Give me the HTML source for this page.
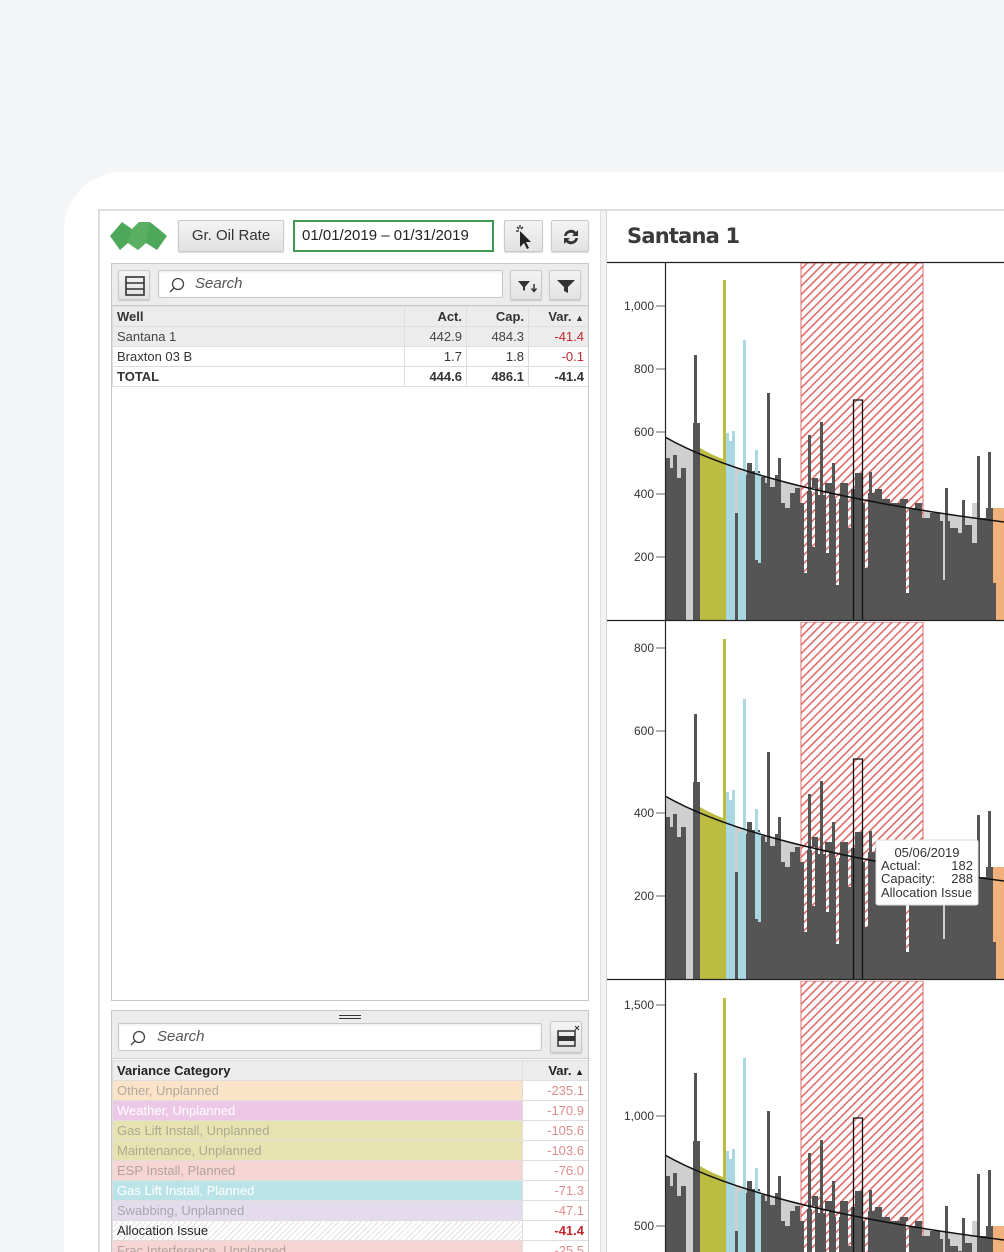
<!DOCTYPE html>
<html><head><meta charset="utf-8"><style>
*{box-sizing:border-box;margin:0;padding:0}
html,body{width:1004px;height:1252px;overflow:hidden}
body{background:#f4f5f7;position:relative;font-family:"Liberation Sans",sans-serif;color:#333}
.frame{position:absolute;left:64px;top:172px;width:940px;height:1080px;background:#fff;border-radius:58px 0 0 0}
.screen{position:absolute;left:98px;top:209px;width:906px;height:1043px;border:2px solid #dcdcdc;border-right:0;border-bottom:0;background:#fff}
.abs{position:absolute}
.btn{position:absolute;background:linear-gradient(#f4f4f4,#e2e2e2);border:1px solid #c9c9c9;border-radius:2px;box-shadow:0 1px 1px rgba(0,0,0,.15)}
.grid{position:absolute;border:1px solid #c8c8c8;background:#fff;overflow:hidden}
.tb{position:absolute;left:0;right:0;top:0;background:#ececec;border-bottom:1px solid #ccc}
.search{position:absolute;background:#fff;border:1px solid #c8c8c8;border-radius:2px;box-shadow:inset 0 1px 2px rgba(0,0,0,.08);font-style:italic;color:#555;font-size:15px}
table{border-collapse:collapse;font-size:13px;position:absolute}
td{height:20px;padding:0 4px;border:1px solid #ddd;white-space:nowrap}
.r{text-align:right}
.red{color:#c0282d}
.lt td{color:rgba(120,120,120,.55)}
</style></head><body>
<div class="frame"></div>
<div class="screen"></div>
<div class="abs" style="left:600px;top:211px;width:7px;height:1041px;background:#f3f3f3;border-left:1px solid #e2e2e2;border-right:1px solid #d5d5d5"></div>

<svg class="abs" style="left:110px;top:219px" width="58" height="34" viewBox="0 0 58 34"><polygon points="0,17 12,3 22,10 29,3 40,3 50,11 57,17 47,31 36,24 28,31 18,24 10,31" fill="#4ea85a"/><polygon points="22,10 29,3 40,3 36,24 28,31 18,24" fill="#5aaf63"/></svg>

<div class="btn" style="left:178px;top:220px;width:106px;height:32px;font-size:15px;text-align:center;line-height:30px;color:#333">Gr. Oil Rate</div>
<div class="abs" style="left:293px;top:220px;width:201px;height:32px;border:2px solid #3e9a4e;background:#fff;font-size:15px;line-height:28px;padding-left:7px;color:#222">01/01/2019 – 01/31/2019</div>
<div class="btn" style="left:504px;top:220px;width:39px;height:32px"><svg width="39" height="32" viewBox="0 0 39 32"><path d="M15 10 L15 26 L19 22 L22 28 L24 27 L21 21 L26 21 Z" fill="#222"/><path d="M12 6l2 2M15 4v3M18 6l-2 2M11 10h3" stroke="#222" stroke-width="1.3"/></svg></div>
<div class="btn" style="left:551px;top:220px;width:38px;height:32px"><svg width="38" height="32" viewBox="0 0 38 32"><path d="M12 15a7 7 0 0 1 12-4l2-2v6h-6l2-2a4.5 4.5 0 0 0-7.5 2z M26 17a7 7 0 0 1-12 4l-2 2v-6h6l-2 2a4.5 4.5 0 0 0 7.5-2z" fill="#333"/></svg></div>

<div class="grid" style="left:111px;top:263px;width:478px;height:738px">
 <div class="tb" style="height:42px"></div>
 <div class="btn" style="left:6px;top:6px;width:32px;height:30px"><svg width="32" height="30"><rect x="7" y="6" width="18" height="18" fill="none" stroke="#333" stroke-width="1.6"/><path d="M7 12h18M7 18h18" stroke="#333" stroke-width="1.6"/></svg></div>
 <div class="search" style="left:46px;top:6px;width:345px;height:28px;line-height:26px;padding-left:36px"><svg class="abs" style="left:9px;top:6px" width="18" height="16"><circle cx="10" cy="7" r="5.5" fill="none" stroke="#444" stroke-width="1.3"/><path d="M6 11l-4 4" stroke="#444" stroke-width="1.3"/></svg>Search</div>
 <div class="btn" style="left:398px;top:6px;width:32px;height:30px"><svg width="32" height="30"><path d="M7 10h12l-5 6v4l-2-1v-3z" fill="#333"/><path d="M23 13v7M20.5 17.5l2.5 3 2.5-3" stroke="#333" stroke-width="1.5" fill="none"/></svg></div>
 <div class="btn" style="left:437px;top:6px;width:32px;height:30px"><svg width="32" height="30"><path d="M7 9h18l-7 7v6l-4-2v-4z" fill="#333"/></svg></div>
 <table style="left:0;top:42px;width:477px">
  <tr style="background:#ececec;font-weight:bold"><td style="width:292px;font-weight:bold">Well</td><td class="r" style="width:62px">Act.</td><td class="r" style="width:62px">Cap.</td><td class="r">Var. <span style="font-size:9px">▲</span></td></tr>
  <tr style="background:#ececec;color:#444"><td>Santana 1</td><td class="r">442.9</td><td class="r">484.3</td><td class="r red">-41.4</td></tr>
  <tr><td>Braxton 03 B</td><td class="r">1.7</td><td class="r">1.8</td><td class="r red">-0.1</td></tr>
  <tr style="font-weight:bold"><td>TOTAL</td><td class="r">444.6</td><td class="r">486.1</td><td class="r">-41.4</td></tr>
 </table>
</div>

<div class="grid" style="left:111px;top:1010px;width:478px;height:242px;border-bottom:0">
 <div class="tb" style="height:48px"></div>
 <div class="abs" style="left:227px;top:4px;width:22px;height:4px;border-top:1px solid #333;border-bottom:1px solid #333"></div>
 <div class="search" style="left:6px;top:12px;width:424px;height:28px;line-height:26px;padding-left:38px"><svg class="abs" style="left:10px;top:6px" width="18" height="16"><circle cx="10" cy="7" r="5.5" fill="none" stroke="#444" stroke-width="1.3"/><path d="M6 11l-4 4" stroke="#444" stroke-width="1.3"/></svg>Search</div>
 <div class="btn" style="left:438px;top:10px;width:32px;height:32px"><svg width="32" height="32"><rect x="7" y="9" width="17" height="15" fill="none" stroke="#333" stroke-width="1.5"/><rect x="7" y="14" width="17" height="5" fill="#333"/><path d="M24 4l4 4M28 4l-4 4" stroke="#333" stroke-width="1"/></svg></div>
 <table style="left:0;top:49px;width:477px">
  <tr style="background:#ececec"><td style="width:410px;font-weight:bold;color:#222">Variance Category</td><td class="r" style="font-weight:bold;color:#222">Var. <span style="font-size:9px">▲</span></td></tr>
  <tr class="lt"><td style="background:#fbe3c8">Other, Unplanned</td><td class="r" style="color:#e08c8c">-235.1</td></tr>
  <tr><td style="background:#ecc8e6;color:#fff">Weather, Unplanned</td><td class="r" style="color:#e08c8c">-170.9</td></tr>
  <tr class="lt"><td style="background:#e6e3b1">Gas Lift Install, Unplanned</td><td class="r" style="color:#e08c8c">-105.6</td></tr>
  <tr class="lt"><td style="background:#e6e3b1">Maintenance, Unplanned</td><td class="r" style="color:#e08c8c">-103.6</td></tr>
  <tr class="lt"><td style="background:#f7d5d4">ESP Install, Planned</td><td class="r" style="color:#e08c8c">-76.0</td></tr>
  <tr><td style="background:#bae3e8;color:#fff">Gas Lift Install, Planned</td><td class="r" style="color:#e08c8c">-71.3</td></tr>
  <tr class="lt"><td style="background:#e4dcec">Swabbing, Unplanned</td><td class="r" style="color:#e08c8c">-47.1</td></tr>
  <tr><td style="background:repeating-linear-gradient(135deg,#fff 0 3px,#e6e0e0 3px 4px);color:#222">Allocation Issue</td><td class="r" style="color:#c0282d;font-weight:bold">-41.4</td></tr>
  <tr class="lt"><td style="background:#f7d5d4">Frac Interference, Unplanned</td><td class="r" style="color:#e08c8c">-25.5</td></tr>
 </table>
</div>

<div class="abs" style="left:627px;top:224px;font-size:21px;font-weight:bold;color:#3a3a3a;font-family:'DejaVu Sans',sans-serif;letter-spacing:-0.8px">Santana 1</div>
<svg class="abs" style="left:607px;top:261px" width="397" height="991" viewBox="607 261 397 991">
<defs>
 <pattern id="h" width="6" height="6" patternUnits="userSpaceOnUse" patternTransform="rotate(45)"><rect width="6" height="6" fill="#fff"/><rect width="1.6" height="6" fill="#e06a6a"/></pattern>
 <clipPath id="c"><rect x="665" y="0" width="339" height="357"/></clipPath>
 <g id="bars" clip-path="url(#c)">
  <path d="M665 174 Q760 228 1004 259 L1004 357 L665 357Z" fill="#cfcfcf"/>
  <rect x="801" y="0" width="122" height="357" fill="url(#h)" stroke="#e06a6a" stroke-width="1"/>
  <path d="M665 357 L665 195 L670 195 L670 205 L673 205 L673 192 L677 192 L677 215 L681 215 L681 205 L686 205 L686 357 L693 357 L693 160 L700 160 L700 220 L723 220 L735 220 L735 250 L738 250 L738 212 L747 212 L747 200 L752 200 L752 208 L760 208 L760 214 L765 214 L765 220 L770 220 L770 224 L775 224 L775 212 L780 212 L780 240 L785 240 L785 245 L790 245 L790 230 L795 230 L795 225 L800 225 L800 240 L806 240 L806 228 L812 228 L812 215 L818 215 L818 232 L825 232 L825 220 L832 220 L832 236 L840 236 L840 220 L848 220 L848 226 L855 226 L855 210 L862 210 L862 240 L868 240 L868 230 L875 230 L875 226 L882 226 L882 236 L890 236 L890 240 L900 240 L900 236 L908 236 L908 245 L915 245 L915 240 L922 240 L922 255 L930 255 L930 250 L940 250 L940 258 L950 258 L950 265 L958 265 L958 270 L965 270 L965 262 L972 262 L972 280 L980 280 L980 255 L986 255 L986 245 L993 245 L993 357Z" fill="#555"/>
  <rect x="943" y="255" width="4" height="62" fill="#cfcfcf"/>
  <rect x="972" y="240" width="5" height="40" fill="#cfcfcf"/>
  <path d="M700 185 Q712 192 723 196 L723 357 L700 357Z" fill="#bcbc42"/>
  <rect x="723" y="17" width="3" height="340" fill="#bcbc42"/>
  <rect x="726" y="170" width="3" height="187" fill="#a9d7e2"/><rect x="729" y="178" width="3" height="179" fill="#a9d7e2"/><rect x="732" y="168" width="3" height="189" fill="#a9d7e2"/>
  <rect x="738" y="210" width="6" height="147" fill="#a9d7e2"/><rect x="743" y="77" width="3" height="280" fill="#a9d7e2"/>
  <rect x="755" y="187" width="3" height="110" fill="#a9d7e2"/><rect x="758" y="210" width="3" height="90" fill="#a9d7e2"/>
  <g fill="#555"><rect x="694" y="92" width="3" height="265"/><rect x="767" y="130" width="3" height="227"/><rect x="778" y="195" width="3" height="162"/><rect x="808" y="172" width="3" height="185"/><rect x="820" y="159" width="3" height="198"/><rect x="832" y="200" width="3" height="157"/><rect x="869" y="209" width="3" height="148"/><rect x="945" y="225" width="3" height="132"/><rect x="962" y="237" width="3" height="120"/><rect x="977" y="193" width="3" height="164"/><rect x="988" y="189" width="3" height="168"/></g>
  <g fill="url(#h)"><rect x="804" y="215" width="3" height="95"/><rect x="812" y="225" width="3" height="59"/><rect x="836" y="230" width="3" height="92"/><rect x="865" y="235" width="3" height="70"/><rect x="906" y="240" width="3" height="90"/><rect x="826" y="230" width="3" height="60"/><rect x="848" y="225" width="3" height="40"/></g>
  <path d="M853.5 357V137h9v220" fill="none" stroke="#111" stroke-width="1.3"/>
  <rect x="993" y="245" width="11" height="112" fill="#f0b27a"/><rect x="993" y="320" width="3" height="37" fill="#555"/>
  <path d="M665 174 Q760 228 1004 259" fill="none" stroke="#111" stroke-width="1.5"/>
 </g>
</defs>
<use href="#bars" transform="translate(0,263)"/>
<use href="#bars" transform="translate(0,622)"/>
<use href="#bars" transform="translate(0,981)"/>
<g stroke="#222" stroke-width="1.2">
 <path d="M607 262.5H1004M607 620.5H1004M607 979.5H1004M665.5 262V1252"/>
</g>
<g stroke="#666" stroke-width="1"><path d="M656 306h9M656 369h9M656 432h9M656 494h9M656 557h9M656 648h9M656 731h9M656 813h9M656 896h9M656 1005h9M656 1116h9M656 1226h9"/></g>
<g font-family="Liberation Sans,sans-serif" font-size="12" fill="#333" text-anchor="end">
 <text x="654" y="310">1,000</text><text x="654" y="373">800</text><text x="654" y="436">600</text><text x="654" y="498">400</text><text x="654" y="561">200</text>
 <text x="654" y="652">800</text><text x="654" y="735">600</text><text x="654" y="817">400</text><text x="654" y="900">200</text>
 <text x="654" y="1009">1,500</text><text x="654" y="1120">1,000</text><text x="654" y="1230">500</text>
</g>
<rect x="876" y="840" width="102" height="65" fill="#fff" stroke="#ddd" rx="2"/>
<g font-family="Liberation Sans,sans-serif" font-size="13" fill="#333">
 <text x="927" y="857" text-anchor="middle">05/06/2019</text>
 <text x="881" y="870">Actual:</text><text x="973" y="870" text-anchor="end">182</text>
 <text x="881" y="883">Capacity:</text><text x="973" y="883" text-anchor="end">288</text>
 <text x="881" y="897">Allocation Issue</text>
</g>
</svg>
</body></html>
